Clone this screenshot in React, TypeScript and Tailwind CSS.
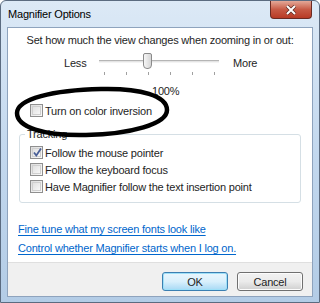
import React from "react";

const font = { fontFamily: '"Liberation Sans", Arial, sans-serif' };

const Box = ({ checked = false }: { checked?: boolean }) => (
  <span className="relative flex h-[13px] w-[13px] shrink-0 items-center justify-center border border-[#8f8f8f] bg-gradient-to-br from-[#dcdcdc] to-[#fbfbfb]">
    <span className="h-[9px] w-[9px] border border-[#cfcfcf] bg-gradient-to-br from-[#e0e0e0] to-[#f7f7f7]" />
    {checked && (
      <svg className="absolute left-[1px] top-[0px]" width="11" height="11" viewBox="0 0 11 11">
        <path d="M2 5.5 L4.3 8.5 L9 1.5" fill="none" stroke="#4a5f97" strokeWidth="1.8" />
      </svg>
    )}
  </span>
);

const Check = ({ label, checked }: { label: string; checked?: boolean }) => (
  <div className="flex h-[17px] items-center gap-[2px]">
    <Box checked={checked} />
    <span>{label}</span>
  </div>
);

export default function App() {
  return (
    <div
      className="relative flex h-[303px] w-[320px] flex-col rounded-t-[6px] border border-[#5b6b80] bg-gradient-to-b from-[#dce9f6] via-[#c3d8ee] to-[#b3cce6] text-[11px] leading-[16px] tracking-[-0.2px] text-[#1e1e1e]"
      style={font}
    >
      <div className="flex h-[26px] shrink-0 items-start justify-between pl-[7px]">
        <span className="mt-[5px] text-black">Magnifier Options</span>
        <div className="mr-[7px] flex h-[18px] w-[42px] items-center justify-center rounded-b-[4px] border border-t-0 border-[#6b2a22] bg-gradient-to-b from-[#e3a898] via-[#c75a45] to-[#b83a25]">
          <svg width="12" height="10" viewBox="0 0 12 10">
            <path d="M2 1 L10 9 M10 1 L2 9" stroke="#5a2a22" strokeWidth="3.4" />
            <path d="M2 1 L10 9 M10 1 L2 9" stroke="#ffffff" strokeWidth="2" />
          </svg>
        </div>
      </div>
      <div className="mx-[6px] flex h-[270px] shrink-0 flex-col border border-[#8ea3bd] bg-white">
        <div className="flex flex-1 flex-col">
          <div className="mt-[4px] h-[16px] whitespace-nowrap text-center">
            Set how much the view changes when zooming in or out:
          </div>
          <div className="mt-[4px] flex h-[26px] items-start">
            <span className="ml-[56px] mt-[3px] w-[35px]">Less</span>
            <div className="relative h-[26px] w-[120px]">
              <div className="absolute left-0 right-0 top-[8px] h-[3px] border-y border-t-[#b5b5b5] border-b-[#f4f4f4] bg-[#e4e4e4]" />
              <div className="absolute left-[44px] top-[1px] h-[16px] w-[9px] rounded-b-[4px] rounded-t-[2px] border border-[#8a8a8a] bg-gradient-to-r from-[#f6f6f6] to-[#d6d6d6]" />
              <div className="absolute left-[5px] right-[4px] top-[20px] flex justify-between">
                {[0, 1, 2, 3, 4, 5].map((i) => (
                  <span key={i} className="h-[3px] w-[1px] bg-[#a0a0a0]" />
                ))}
              </div>
            </div>
            <span className="ml-[14px] mt-[3px]">More</span>
          </div>
          <div className="mt-[5px] h-[16px] pl-[144px]">100%</div>
          <div className="mt-[3px] pl-[22px]">
            <Check label="Turn on color inversion" />
          </div>
          <fieldset className="mx-[11px] mt-[8px] rounded-[3px] border border-[#d5dfe5] pb-[7px] pl-[10px] pt-[3px]">
            <legend className="-ml-[5px] px-[2px] leading-[14px]">Tracking</legend>
            <Check label="Follow the mouse pointer" checked />
            <Check label="Follow the keyboard focus" />
            <Check label="Have Magnifier follow the text insertion point" />
          </fieldset>
          <div className="mt-[18px] flex flex-col gap-[3px] pl-[10px] text-[#0066cc]">
            <a className="underline underline-offset-[2px]">Fine tune what my screen fonts look like</a>
            <a className="underline underline-offset-[2px]">Control whether Magnifier starts when I log on.</a>
          </div>
        </div>
        <div className="flex h-[34px] shrink-0 items-start justify-end gap-[9px] border-t border-[#dfdfdf] bg-[#f0f0f0] pr-[9px] pt-[9px]">
          <button className="h-[19px] w-[66px] rounded-[3px] border border-[#3c7fb1] bg-gradient-to-b from-[#eaf6fd] via-[#d9f0fc] to-[#a7d9f5] leading-[16px] shadow-[inset_0_0_0_1px_#9ee0f8]">
            OK
          </button>
          <button className="h-[19px] w-[66px] rounded-[3px] border border-[#707070] bg-gradient-to-b from-[#f2f2f2] via-[#ebebeb] to-[#cfcfcf] leading-[16px] shadow-[inset_0_0_0_1px_#fcfcfc]">
            Cancel
          </button>
        </div>
      </div>
      <svg className="pointer-events-none absolute left-0 top-0" width="320" height="303" viewBox="0 0 320 303">
        <path
          d="M16 112 C16 98 52 89 100 88 C140 87 166 95 166 109 C166 123 130 133 85 134 C42 135 16 126 16 112 Z"
          fill="none"
          stroke="#000"
          strokeWidth="4.5"
        />
      </svg>
    </div>
  );
}
